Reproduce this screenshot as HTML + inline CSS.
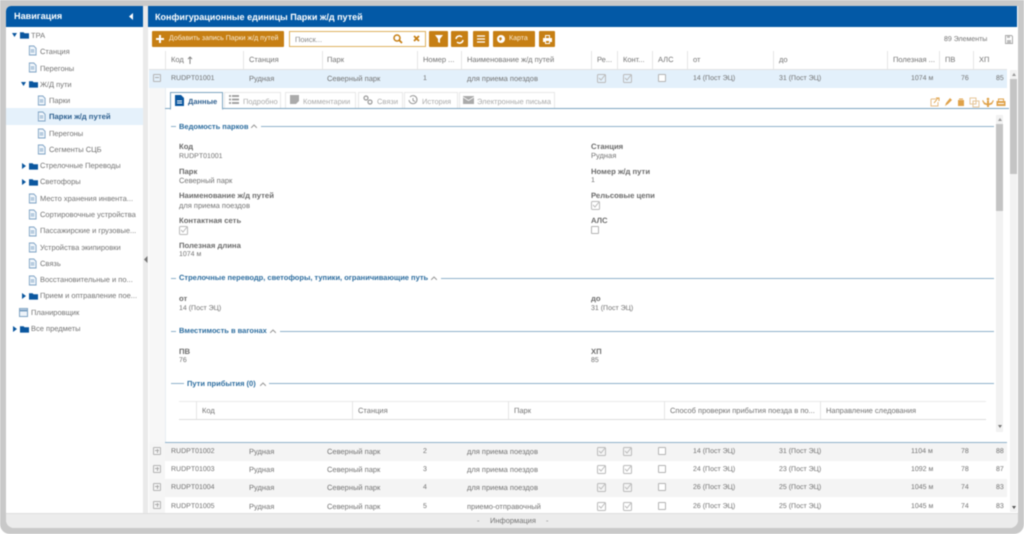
<!DOCTYPE html>
<html lang="ru"><head><meta charset="utf-8"><title>Парки ж/д путей</title>
<style>
html,body{margin:0;padding:0;background:#fff}
#p{position:relative;width:1024px;height:534px;overflow:hidden;background:#fff;filter:blur(.45px);font-family:"Liberation Sans","DejaVu Sans",sans-serif;font-size:7.500px;color:#727272;text-rendering:geometricPrecision}
#p div,#p i,#p svg{position:absolute;display:block}
#p i{font-style:normal;line-height:10px;height:10px;white-space:nowrap;margin-top:1px}
#p i.n{font-size:7px}
#p i.b{font-weight:bold;font-size:7.700px;color:#6a6a6a}
#p i.h{font-weight:bold;color:#2d6d9f;font-size:7.500px}
.l{height:1px;background:#8fb2cb}
.w{color:#fff;font-weight:bold}
.o{background:#c67f14;border-radius:1px}
.v{width:1px;top:51px;height:18px;background:#e6e6e6}
.k{width:6px;height:6px;border:1px solid #b4b4b4;border-radius:1px;background:#fff}
.tb{top:92px;height:15px;border:1px solid #e8e8e8;border-bottom:none;background:#fff}
.r{left:149px;width:858px;height:18px}
</style></head><body><div id="p">
<svg width="0" height="0"><defs>
<symbol id="doc" viewBox="0 0 10 11"><path d="M1.500.5h5l2.500 2.500v7.500h-7.500z" fill="#eef4fa" stroke="#7fa3c4"/><path d="M3 5h4M3 7h4" stroke="#7fa3c4"/></symbol>
<symbol id="fold" viewBox="0 0 10 8"><path d="M0 1h4l1 1h5v6h-10z" fill="#0b579f"/></symbol>
<symbol id="chk" viewBox="0 0 9 9"><rect x=".5" y=".5" width="8" height="8" rx="1" fill="none" stroke="#bbb"/><path d="M2 4l2 2 4-5" fill="none" stroke="#bbb"/></symbol>
</defs></svg>

<!-- frame -->
<div style="left:0;top:0;width:1024px;height:534px;background:#c9c9c9;border-radius:0 0 10px 10px"></div>
<div style="left:6px;top:6px;width:1012px;height:522px;background:#eaeaea;border-radius:6px 0 8px 8px"></div>

<!-- sidebar -->
<div style="left:6px;top:6px;width:137px;height:507px;background:#fff;border-radius:5px 0 0 0"></div>
<div style="left:6px;top:6px;width:137px;height:21px;background:#0359a6;border-radius:5px 0 0 0"></div>
<i class="w" style="left:14px;top:10px;font-size:9.100px">Навигация</i>
<svg style="left:129px;top:13px" width="5" height="7"><path d="M4 0v7L0 3.500z" fill="#fff"/></svg>
<div style="left:6px;top:108px;width:137px;height:17px;background:#e5f1fb"></div>

<svg style="left:12px;top:33px" width="5" height="4"><path d="M0 0h5L2.500 4z" fill="#0b579f"/></svg>
<svg style="left:20px;top:31px" width="9" height="8"><use href="#fold"/></svg>
<i style="left:31px;top:30px">ТРА</i>
<svg style="left:28px;top:45px" width="9" height="11"><use href="#doc"/></svg><i style="left:40px;top:46px">Станция</i>
<svg style="left:28px;top:62px" width="9" height="11"><use href="#doc"/></svg><i style="left:40px;top:63px">Перегоны</i>
<svg style="left:21px;top:82px" width="5" height="4"><path d="M0 0h5L2.500 4z" fill="#0b579f"/></svg>
<svg style="left:29px;top:80px" width="9" height="8"><use href="#fold"/></svg>
<i style="left:40px;top:79px">Ж/Д пути</i>
<svg style="left:37px;top:95px" width="9" height="11"><use href="#doc"/></svg><i style="left:49px;top:95px">Парки</i>
<svg style="left:37px;top:111px" width="9" height="11"><use href="#doc"/></svg><i class="b" style="left:49px;top:111px;color:#2d5f8f">Парки ж/д путей</i>
<svg style="left:37px;top:128px" width="9" height="11"><use href="#doc"/></svg><i style="left:49px;top:128px">Перегоны</i>
<svg style="left:37px;top:144px" width="9" height="11"><use href="#doc"/></svg><i style="left:49px;top:144px">Сегменты СЦБ</i>
<svg style="left:22px;top:163px" width="4" height="6"><path d="M0 0l4 3-4 3z" fill="#0b579f"/></svg>
<svg style="left:29px;top:162px" width="9" height="8"><use href="#fold"/></svg>
<i style="left:40px;top:160px">Стрелочные Переводы</i>
<svg style="left:22px;top:179px" width="4" height="6"><path d="M0 0l4 3-4 3z" fill="#0b579f"/></svg>
<svg style="left:29px;top:178px" width="9" height="8"><use href="#fold"/></svg>
<i style="left:40px;top:176px">Светофоры</i>
<svg style="left:28px;top:193px" width="9" height="11"><use href="#doc"/></svg><i style="left:40px;top:193px">Место хранения инвента...</i>
<svg style="left:28px;top:209px" width="9" height="11"><use href="#doc"/></svg><i style="left:40px;top:209px">Сортировочные устройства</i>
<svg style="left:28px;top:226px" width="9" height="11"><use href="#doc"/></svg><i style="left:40px;top:225px">Пассажирские и грузовые...</i>
<svg style="left:28px;top:242px" width="9" height="11"><use href="#doc"/></svg><i style="left:40px;top:242px">Устройства экипировки</i>
<svg style="left:28px;top:258px" width="9" height="11"><use href="#doc"/></svg><i style="left:40px;top:258px">Связь</i>
<svg style="left:28px;top:275px" width="9" height="11"><use href="#doc"/></svg><i style="left:40px;top:274px">Восстановительные и по...</i>
<svg style="left:22px;top:293px" width="4" height="6"><path d="M0 0l4 3-4 3z" fill="#0b579f"/></svg>
<svg style="left:29px;top:292px" width="9" height="8"><use href="#fold"/></svg>
<i style="left:40px;top:290px">Прием и оптравление пое...</i>
<svg style="left:19px;top:307px" width="10" height="10"><rect x=".5" y="1.500" width="8" height="8" fill="#eef4fa" stroke="#7fa3c4"/><path d="M.5 3.500h8" stroke="#7fa3c4" stroke-width="2"/></svg>
<i style="left:31px;top:307px">Планировщик</i>
<svg style="left:13px;top:326px" width="4" height="6"><path d="M0 0l4 3-4 3z" fill="#0b579f"/></svg>
<svg style="left:20px;top:325px" width="9" height="8"><use href="#fold"/></svg>
<i style="left:31px;top:323px">Все предметы</i>
<svg style="left:144px;top:256px" width="4" height="7"><path d="M3.500 0v7L0 3.500z" fill="#777"/></svg>

<!-- main -->
<div style="left:148px;top:6px;width:870px;height:507px;background:#fff"></div>
<div style="left:148px;top:6px;width:869px;height:21px;background:#0359a6"></div>
<i class="w" style="left:155px;top:11px;font-size:9.050px">Конфигурационные единицы Парки ж/д путей</i>

<!-- toolbar -->
<div class="o" style="left:152px;top:31px;width:132px;height:16px"></div>
<svg style="left:156px;top:35px" width="8" height="8"><path d="M3 0h2v3h3v2H5v3H3V5H0V3h3z" fill="#fff"/></svg>
<i class="n" style="left:169px;top:33px;color:#fbeed8">Добавить запись Парки ж/д путей</i>
<div style="left:289px;top:31px;width:135px;height:14px;border:1px solid #dfb25f;background:#fff"></div>
<i style="left:295px;top:34px;color:#888">Поиск...</i>
<svg style="left:393px;top:34px" width="10" height="10"><circle cx="4" cy="4" r="3" fill="none" stroke="#c67f14" stroke-width="1.500"/><path d="M6 6l3 3" stroke="#c67f14" stroke-width="1.800"/></svg>
<svg style="left:413px;top:35px" width="7" height="7"><path d="M1 1l5 5M6 1L1 6" stroke="#c67f14" stroke-width="1.800"/></svg>
<div class="o" style="left:429px;top:31px;width:19px;height:16px"></div>
<svg style="left:435px;top:35px" width="8" height="8"><path d="M0 0h8L5 4v4L3 7V4z" fill="#fff"/></svg>
<div class="o" style="left:451px;top:31px;width:17px;height:16px"></div>
<svg style="left:455px;top:35px" width="9" height="9"><path d="M1 4a3.500 3.500 0 0 1 6-2M8 5a3.500 3.500 0 0 1-6 2" fill="none" stroke="#fff" stroke-width="1.500"/></svg>
<div class="o" style="left:473px;top:31px;width:16px;height:16px"></div>
<svg style="left:477px;top:35px" width="8" height="8"><path d="M0 1h8M0 4h8M0 7h8" stroke="#fff" stroke-width="1.300"/></svg>
<div class="o" style="left:493px;top:31px;width:42px;height:16px"></div>
<svg style="left:497px;top:35px" width="8" height="8"><circle cx="4" cy="4" r="4" fill="#fff"/><path d="M2 3l2-1 1 2-2 2z" fill="#c67f14"/></svg>
<i class="n" style="left:509px;top:33px;color:#fbeed8">Карта</i>
<div class="o" style="left:539px;top:31px;width:16px;height:16px"></div>
<svg style="left:543px;top:35px" width="9" height="9"><path d="M2 0h5v3h2v4H7v2H2V7H0V3h2z" fill="#fff"/><path d="M3 1h3v2H3zM3 6h3v2H3z" fill="#c67f14"/></svg>
<i class="n" style="left:944px;top:34px">89 Элементы</i>
<svg style="left:1005px;top:35px" width="8" height="9"><path d="M.5.500h6l1 1v7h-7z" fill="none" stroke="#aaa"/><path d="M2 1h3v2H2zM2 5h4v3H2z" fill="#bbb"/></svg>

<!-- table header -->
<div style="left:149px;top:69px;width:858px;height:1px;background:#e2e2e2"></div>
<div class="v" style="left:165px"></div><div class="v" style="left:243px"></div><div class="v" style="left:322px"></div><div class="v" style="left:417px"></div><div class="v" style="left:461px"></div><div class="v" style="left:591px"></div><div class="v" style="left:617px"></div><div class="v" style="left:652px"></div><div class="v" style="left:687px"></div><div class="v" style="left:773px"></div><div class="v" style="left:887px"></div><div class="v" style="left:939px"></div><div class="v" style="left:973px"></div>
<i style="left:171px;top:54px">Код</i><svg style="left:187px;top:56px" width="6" height="8"><path d="M3 8V1M1 3l2-2 2 2" fill="none" stroke="#888"/></svg>
<i style="left:249px;top:54px">Станция</i><i style="left:327px;top:54px">Парк</i><i style="left:423px;top:54px">Номер ...</i><i style="left:467px;top:54px">Наименование ж/д путей</i><i style="left:597px;top:54px">Ре...</i><i style="left:623px;top:54px">Конт...</i><i style="left:658px;top:54px">АЛС</i><i style="left:693px;top:54px">от</i><i style="left:779px;top:54px">до</i><i style="left:893px;top:54px">Полезная ...</i><i style="left:945px;top:54px">ПВ</i><i style="left:979px;top:54px">ХП</i>

<!-- selected row -->
<div class="r" style="top:70px;background:#e3f0fb"></div>
<div class="k" style="left:153px;top:74px;background:none"></div><div style="left:155px;top:77px;width:4px;height:1px;background:#aaa"></div>
<i class="n" style="left:171px;top:73px">RUDPT01001</i><i style="left:249px;top:73px">Рудная</i><i style="left:327px;top:73px">Северный парк</i><i class="n" style="left:423px;top:73px">1</i><i style="left:467px;top:73px">для приема поездов</i>
<svg style="left:597px;top:74px" width="9" height="9"><use href="#chk"/></svg><svg style="left:623px;top:74px" width="9" height="9"><use href="#chk"/></svg>
<div class="k" style="left:658px;top:74px"></div>
<i class="n" style="left:693px;top:73px">14 (Пост ЭЦ)</i><i class="n" style="left:779px;top:73px">31 (Пост ЭЦ)</i>
<i class="n" style="left:911px;top:73px">1074 м</i><i class="n" style="left:961px;top:73px">76</i><i class="n" style="left:996px;top:73px">85</i>

<!-- detail -->
<div style="left:149px;top:88px;width:16px;height:355px;background:#f7f7f7"></div>
<div style="left:165px;top:88px;width:1px;height:355px;background:#e8eef3"></div>
<div style="left:165px;top:108px;width:844px;height:1px;background:#7ea6c2"></div>
<div class="tb" style="left:170px;top:92px;width:51px;height:16px;border:1px solid #7ea6c2;border-bottom:1px solid #fff"></div>
<svg style="left:175px;top:95px" width="9" height="11"><path d="M0 0h6l3 3v8H0z" fill="#0b579f"/><path d="M2 6h5M2 8h5" stroke="#fff"/></svg>
<i class="h" style="left:188px;top:96px;color:#2d5f8f">Данные</i>
<div class="tb" style="left:224px;width:55px"></div>
<svg style="left:229px;top:95px" width="10" height="9"><path d="M0 1h2M3 1h7M0 4.500h2M3 4.500h7M0 8h2M3 8h7" stroke="#999" stroke-width="1.800"/></svg>
<i style="left:243px;top:96px;color:#aaa">Подробно</i>
<div class="tb" style="left:285px;width:69px"></div>
<svg style="left:290px;top:95px" width="9" height="9"><path d="M0 0h9v6L6 9H0z" fill="#aaa"/></svg>
<i style="left:303px;top:96px;color:#aaa">Комментарии</i>
<div class="tb" style="left:358px;width:43px"></div>
<svg style="left:363px;top:95px" width="10" height="10"><circle cx="3" cy="3" r="2" fill="none" stroke="#999" stroke-width="1.200"/><circle cx="7" cy="7" r="2" fill="none" stroke="#999" stroke-width="1.200"/></svg>
<i style="left:377px;top:96px;color:#aaa">Связи</i>
<div class="tb" style="left:404px;width:52px"></div>
<svg style="left:408px;top:95px" width="10" height="10"><path d="M2 2a4 4 0 1 1-1 3M5 3v2.500l2 1" fill="none" stroke="#999"/></svg>
<i style="left:422px;top:96px;color:#aaa">История</i>
<div class="tb" style="left:459px;width:94px"></div>
<svg style="left:463px;top:96px" width="11" height="8"><path d="M0 0h11v8H0z" fill="#aaa"/><path d="M0 1l5.500 3.500L11 1" fill="none" stroke="#eee"/></svg>
<i style="left:477px;top:96px;color:#aaa">Электронные письма</i>

<svg style="left:930px;top:97px" width="78" height="11" fill="#dfa24a">
<path d="M1 2h5M1 2v7h7V5" fill="none" stroke="#e6bd85"/><path d="M4 6l4-5M6 1h3v3" fill="none" stroke="#dfa24a"/>
<path d="M15 9l1-3 4-5 2 2-4 4z"/>
<path d="M28 3h6v6h-6zM29 1.500h4v1h-4z"/>
<path d="M40 1h6v6h-6zM43 4h6v6h-6z" fill="none" stroke="#e6c69a"/>
<circle cx="58" cy="2" r="1.300"/><path d="M53 3l1.500 2.500 2.500 1V3.500h2V6.500l2.500-1L63 3l.8.8-1.800 3.400-3 1V10h-2V8.200l-3-1-1.800-3.400z"/>
<path d="M68 4V1.500h6V4h1.500v5h-9V4z"/><path d="M69 2.500h4V4h-4zM68 6h6v1h-6z" fill="#fff"/>
</svg>

<div style="left:996px;top:115px;width:7px;height:317px;background:#f2f2f2"></div>
<div style="left:996px;top:124px;width:7px;height:87px;background:#c4c4c4"></div>
<svg style="left:998px;top:118px" width="4" height="3"><path d="M2 0l2 3H0z" fill="#999"/></svg>
<svg style="left:998px;top:425px" width="4" height="3"><path d="M0 0h4L2 3z" fill="#777"/></svg>

<div style="left:1010px;top:70px;width:7px;height:442px;background:#f2f2f2"></div>
<div style="left:1010px;top:79px;width:7px;height:95px;background:#c4c4c4"></div>
<svg style="left:1012px;top:73px" width="4" height="3"><path d="M2 0l2 3H0z" fill="#999"/></svg>
<svg style="left:1012px;top:506px" width="4" height="3"><path d="M0 0h4L2 3z" fill="#555"/></svg>

<!-- section: parks -->
<div class="l" style="left:171px;top:126px;width:5px"></div><i class="h" style="left:179px;top:121px">Ведомость парков</i>
<svg style="left:251px;top:124px" width="6" height="4"><path d="M0 4l3-3 3 3" fill="none" stroke="#999"/></svg>
<div class="l" style="left:261px;top:126px;width:733px"></div>
<i class="b" style="left:179px;top:141px">Код</i><i class="n" style="left:179px;top:151px">RUDPT01001</i>
<i class="b" style="left:179px;top:166px">Парк</i><i style="left:179px;top:175px">Северный парк</i>
<i class="b" style="left:179px;top:190px">Наименование ж/д путей</i><i style="left:179px;top:200px">для приема поездов</i>
<i class="b" style="left:179px;top:215px">Контактная сеть</i><svg style="left:179px;top:226px" width="9" height="9"><use href="#chk"/></svg>
<i class="b" style="left:179px;top:240px">Полезная длина</i><i class="n" style="left:179px;top:249px">1074 м</i>
<i class="b" style="left:591px;top:141px">Станция</i><i style="left:591px;top:150px">Рудная</i>
<i class="b" style="left:591px;top:166px">Номер ж/д пути</i><i class="n" style="left:591px;top:175px">1</i>
<i class="b" style="left:591px;top:190px">Рельсовые цепи</i><svg style="left:591px;top:201px" width="9" height="9"><use href="#chk"/></svg>
<i class="b" style="left:591px;top:215px">АЛС</i><div class="k" style="left:591px;top:226px"></div>

<div class="l" style="left:171px;top:278px;width:5px"></div><i class="h" style="left:179px;top:272px">Стрелочные переводр, светофоры, тупики, ограничивающие путь</i>
<svg style="left:431px;top:276px" width="6" height="4"><path d="M0 4l3-3 3 3" fill="none" stroke="#999"/></svg>
<div class="l" style="left:441px;top:278px;width:553px"></div>
<i class="b" style="left:179px;top:293px">от</i><i class="n" style="left:179px;top:303px">14 (Пост ЭЦ)</i>
<i class="b" style="left:591px;top:293px">до</i><i class="n" style="left:591px;top:303px">31 (Пост ЭЦ)</i>

<div class="l" style="left:171px;top:331px;width:5px"></div><i class="h" style="left:179px;top:325px">Вместимость в вагонах</i>
<svg style="left:270px;top:329px" width="6" height="4"><path d="M0 4l3-3 3 3" fill="none" stroke="#999"/></svg>
<div class="l" style="left:280px;top:331px;width:714px"></div>
<i class="b" style="left:179px;top:346px">ПВ</i><i class="n" style="left:179px;top:355px">76</i>
<i class="b" style="left:591px;top:346px">ХП</i><i class="n" style="left:591px;top:355px">85</i>

<div class="l" style="left:171px;top:383px;width:13px"></div><i class="h" style="left:187px;top:378px">Пути прибытия (0)</i>
<svg style="left:260px;top:382px" width="6" height="4"><path d="M0 4l3-3 3 3" fill="none" stroke="#999"/></svg>
<div class="l" style="left:269px;top:383px;width:725px"></div>

<div style="left:179px;top:401px;width:807px;height:1px;background:#eaeaea"></div>
<div style="left:179px;top:419px;width:807px;height:1px;background:#dcdcdc"></div>
<div class="v" style="left:196px;top:401px"></div><div class="v" style="left:352px;top:401px"></div><div class="v" style="left:508px;top:401px"></div><div class="v" style="left:664px;top:401px"></div><div class="v" style="left:820px;top:401px"></div>
<i style="left:202px;top:405px">Код</i><i style="left:358px;top:405px">Станция</i><i style="left:514px;top:405px">Парк</i><i style="left:670px;top:405px">Способ проверки прибытия поезда в по...</i><i style="left:826px;top:405px">Направление следования</i>

<!-- rows -->
<div style="left:165px;top:442px;width:842px;height:1px;background:#8fb2cb"></div>
<div class="r" style="top:443px;background:#f4f4f4"></div>
<div class="r" style="top:461px;background:#fff"></div>
<div class="r" style="top:479px;background:#f4f4f4"></div>
<div class="r" style="top:497px;background:#fff;height:16px"></div>
<div style="left:149px;top:443px;width:16px;height:70px;background:#f5f5f5"></div>

<div class="k" style="left:153px;top:447px;background:none"></div><div style="left:155px;top:450px;width:4px;height:1px;background:#aaa"></div><div style="left:156.500px;top:448.500px;width:1px;height:4px;background:#aaa"></div>
<i class="n" style="left:171px;top:446px">RUDPT01002</i><i style="left:249px;top:446px">Рудная</i><i style="left:327px;top:446px">Северный парк</i><i class="n" style="left:423px;top:446px">2</i><i style="left:467px;top:446px">для приема поездов</i>
<svg style="left:597px;top:447px" width="9" height="9"><use href="#chk"/></svg><svg style="left:623px;top:447px" width="9" height="9"><use href="#chk"/></svg><div class="k" style="left:658px;top:447px"></div>
<i class="n" style="left:693px;top:446px">14 (Пост ЭЦ)</i><i class="n" style="left:779px;top:446px">31 (Пост ЭЦ)</i><i class="n" style="left:911px;top:446px">1104 м</i><i class="n" style="left:961px;top:446px">78</i><i class="n" style="left:996px;top:446px">88</i>

<div class="k" style="left:153px;top:465px;background:none"></div><div style="left:155px;top:468px;width:4px;height:1px;background:#aaa"></div><div style="left:156.500px;top:466.500px;width:1px;height:4px;background:#aaa"></div>
<i class="n" style="left:171px;top:464px">RUDPT01003</i><i style="left:249px;top:464px">Рудная</i><i style="left:327px;top:464px">Северный парк</i><i class="n" style="left:423px;top:464px">3</i><i style="left:467px;top:464px">для приема поездов</i>
<svg style="left:597px;top:465px" width="9" height="9"><use href="#chk"/></svg><svg style="left:623px;top:465px" width="9" height="9"><use href="#chk"/></svg><div class="k" style="left:658px;top:465px"></div>
<i class="n" style="left:693px;top:464px">24 (Пост ЭЦ)</i><i class="n" style="left:779px;top:464px">23 (Пост ЭЦ)</i><i class="n" style="left:911px;top:464px">1092 м</i><i class="n" style="left:961px;top:464px">78</i><i class="n" style="left:996px;top:464px">87</i>

<div class="k" style="left:153px;top:483px;background:none"></div><div style="left:155px;top:486px;width:4px;height:1px;background:#aaa"></div><div style="left:156.500px;top:484.500px;width:1px;height:4px;background:#aaa"></div>
<i class="n" style="left:171px;top:482px">RUDPT01004</i><i style="left:249px;top:482px">Рудная</i><i style="left:327px;top:482px">Северный парк</i><i class="n" style="left:423px;top:482px">4</i><i style="left:467px;top:482px">для приема поездов</i>
<svg style="left:597px;top:483px" width="9" height="9"><use href="#chk"/></svg><svg style="left:623px;top:483px" width="9" height="9"><use href="#chk"/></svg><div class="k" style="left:658px;top:483px"></div>
<i class="n" style="left:693px;top:482px">26 (Пост ЭЦ)</i><i class="n" style="left:779px;top:482px">25 (Пост ЭЦ)</i><i class="n" style="left:911px;top:482px">1045 м</i><i class="n" style="left:961px;top:482px">74</i><i class="n" style="left:996px;top:482px">83</i>

<div class="k" style="left:153px;top:501px;background:none"></div><div style="left:155px;top:504px;width:4px;height:1px;background:#aaa"></div><div style="left:156.500px;top:502.500px;width:1px;height:4px;background:#aaa"></div>
<i class="n" style="left:171px;top:501px">RUDPT01005</i><i style="left:249px;top:501px">Рудная</i><i style="left:327px;top:501px">Северный парк</i><i class="n" style="left:423px;top:501px">5</i><i style="left:467px;top:501px">приемо-отправочный</i>
<svg style="left:597px;top:502px" width="9" height="9"><use href="#chk"/></svg><svg style="left:623px;top:502px" width="9" height="9"><use href="#chk"/></svg><div class="k" style="left:658px;top:502px"></div>
<i class="n" style="left:693px;top:501px">26 (Пост ЭЦ)</i><i class="n" style="left:779px;top:501px">25 (Пост ЭЦ)</i><i class="n" style="left:911px;top:501px">1045 м</i><i class="n" style="left:961px;top:501px">74</i><i class="n" style="left:996px;top:501px">83</i>

<!-- bottom bar -->
<div style="left:6px;top:513px;width:1012px;height:15px;background:#ececec;border-top:1px solid #dedede;border-radius:0 0 8px 8px;box-sizing:border-box"></div>
<i style="left:477px;top:515px;color:#888">-</i><i style="left:490px;top:515px">Информация</i><i style="left:546px;top:515px;color:#888">-</i>
</div></body></html>
